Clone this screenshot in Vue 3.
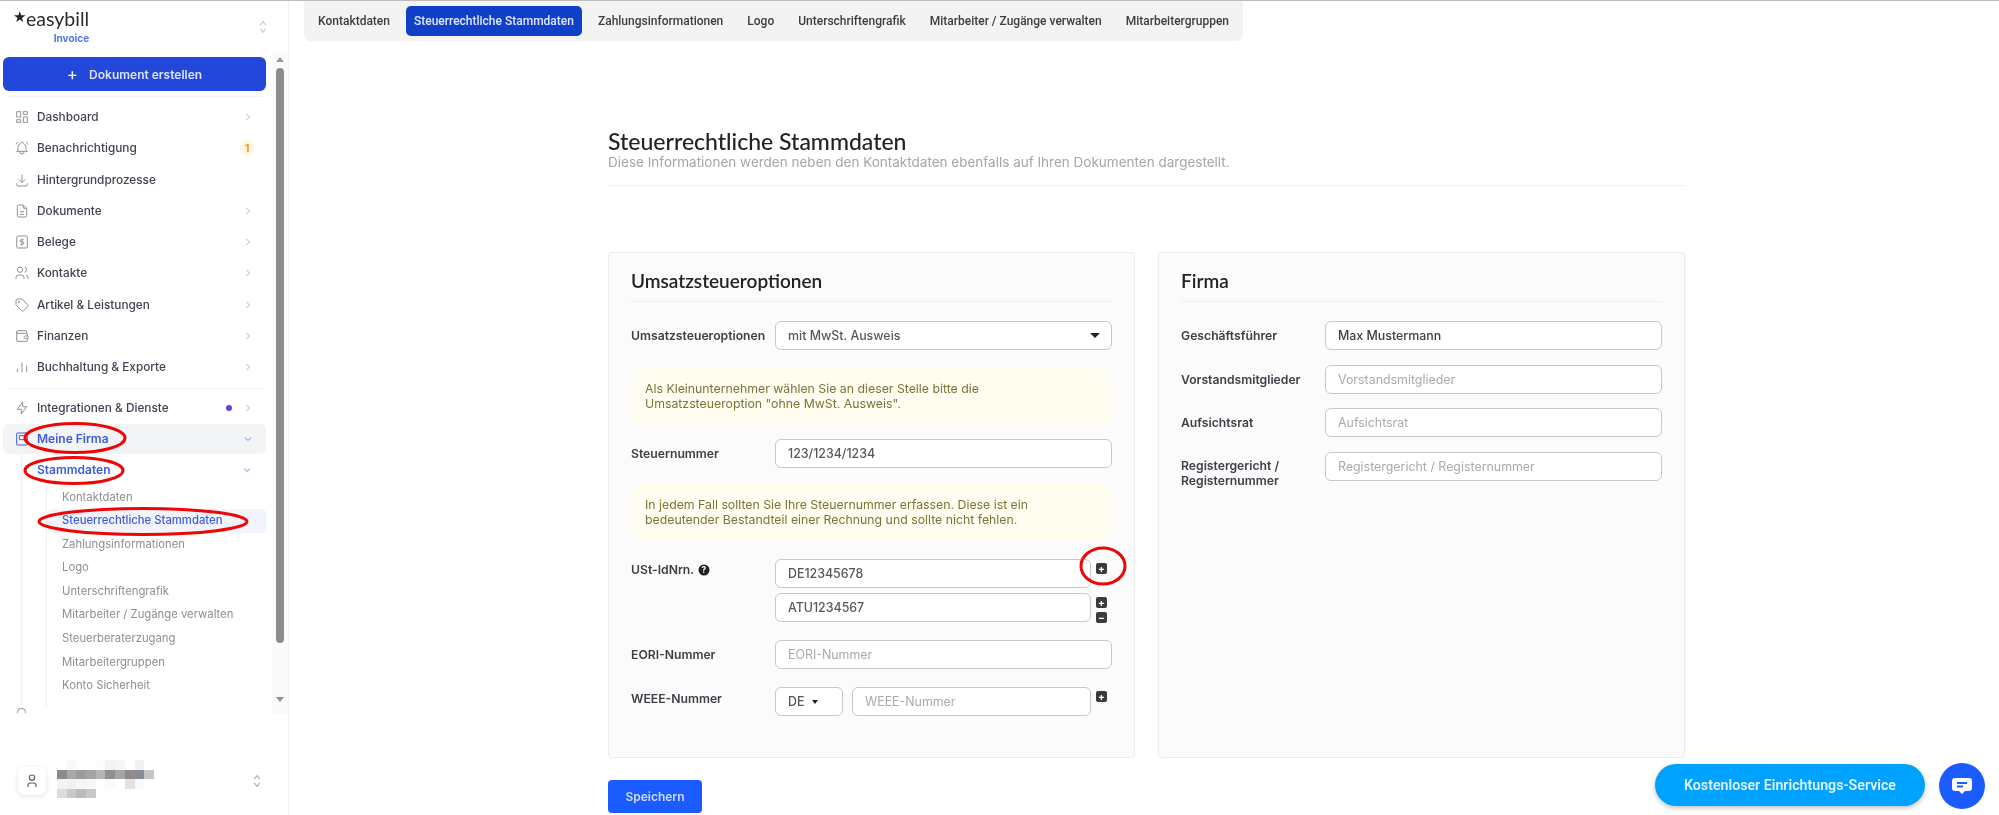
<script setup>
const nav = [
  { label: 'Dashboard', chev: true, d: 'M4 4h6v8h-6z M4 16h6v4h-6z M14 12h6v8h-6z M14 4h6v4h-6z' },
  { label: 'Benachrichtigung', badge: '1', d: 'M10 5a2 2 0 1 1 4 0a7 7 0 0 1 4 6v3a4 4 0 0 0 2 3h-16a4 4 0 0 0 2 -3v-3a7 7 0 0 1 4 -6 M9 17v1a3 3 0 0 0 6 0v-1 M21 6.727a11.05 11.05 0 0 0 -2.794 -3.727 M3 6.727a11.05 11.05 0 0 1 2.792 -3.727' },
  { label: 'Hintergrundprozesse', d: 'M4 17v2a2 2 0 0 0 2 2h12a2 2 0 0 0 2 -2v-2 M7 11l5 5l5 -5 M12 4l0 12' },
  { label: 'Dokumente', chev: true, d: 'M14 3v4a1 1 0 0 0 1 1h4 M17 21h-10a2 2 0 0 1 -2 -2v-14a2 2 0 0 1 2 -2h7l5 5v11a2 2 0 0 1 -2 2z M9 9l1 0 M9 13l6 0 M9 17l6 0' },
  { label: 'Belege', chev: true, d: 'M6 3h12a2 2 0 0 1 2 2v14a2 2 0 0 1 -2 2h-12a2 2 0 0 1 -2 -2v-14a2 2 0 0 1 2 -2z M14.5 8.5h-3.5a1.75 1.75 0 0 0 0 3.5h2a1.75 1.75 0 0 1 0 3.5h-3.5 M12 7v10' },
  { label: 'Kontakte', chev: true, d: 'M9 7m-4 0a4 4 0 1 0 8 0a4 4 0 1 0 -8 0 M3 21v-2a4 4 0 0 1 4 -4h4a4 4 0 0 1 4 4v2 M16 3.13a4 4 0 0 1 0 7.75 M21 21v-2a4 4 0 0 0 -3 -3.85' },
  { label: 'Artikel & Leistungen', chev: true, d: 'M7.5 7.5m-1 0a1 1 0 1 0 2 0a1 1 0 1 0 -2 0 M3 6v5.172a2 2 0 0 0 .586 1.414l7.71 7.71a2.41 2.41 0 0 0 3.408 0l5.592 -5.592a2.41 2.41 0 0 0 0 -3.408l-7.71 -7.71a2 2 0 0 0 -1.414 -.586h-5.172a3 3 0 0 0 -3 3z' },
  { label: 'Finanzen', chev: true, d: 'M19 8v-3a1 1 0 0 0 -1 -1h-12a2 2 0 0 0 -2 2 M4 6a2 2 0 0 0 2 2h13a1 1 0 0 1 1 1v3 M20 16v3a1 1 0 0 1 -1 1h-13a2 2 0 0 1 -2 -2v-12 M21 12v4h-4a2 2 0 0 1 0 -4h4' },
  { label: 'Buchhaltung & Exporte', chev: true, d: 'M5 20v-5 M12 20v-15 M19 20v-10' },
]
const subs = ['Kontaktdaten', 'Steuerrechtliche Stammdaten', 'Zahlungsinformationen', 'Logo', 'Unterschriftengrafik', 'Mitarbeiter / Zugänge verwalten', 'Steuerberaterzugang', 'Mitarbeitergruppen', 'Konto Sicherheit']
const tabs = ['Kontaktdaten', 'Steuerrechtliche Stammdaten', 'Zahlungsinformationen', 'Logo', 'Unterschriftengrafik', 'Mitarbeiter / Zugänge verwalten', 'Mitarbeitergruppen']
const mosaic = [
  ['#fff','#fafafa','#fff','#fff','#fcfcfc','#f3f3f3','#f6f6f6','#fff','#f1f1f1','#fff'],
  ['#8f8a8a','#aaa7a7','#9a9ca0','#a5a3a3','#b5b5b5','#8f9090','#a5a5a5','#8f8b8a','#868d98','#c5c5c5'],
  ['#f3f3f3','#f1f1f1','#f6f6f6','#f6f6f6','#fff','#fafafa','#fff','#e4e2e2','#fafafa','#fff'],
  ['#dcdcdc','#c9c9c9','#b8bbc2','#c9c9c9','#fff','#fff','#fff','#fff','#fff','#fff'],
]
</script>

<template>
  <div class="app">
    <aside class="sidebar">
      <div class="brand">
        <div class="logo">
          <div class="logo-main"><span class="star">★</span><span>easybill</span></div>
          <div class="logo-sub">Invoice</div>
        </div>
        <svg class="updown" viewBox="0 0 24 24" width="14" height="16"><path d="M7 9l5 -6l5 6 M7 15l5 6l5 -6" /></svg>
      </div>
      <div class="scroll-wrap">
        <div class="scroll-body">
          <button class="create"><span class="plus">+</span>Dokument erstellen</button>
          <div class="divider first"></div>
          <div v-for="item in nav" :key="item.label" class="nav-item">
            <svg class="nav-icon" viewBox="0 0 24 24" width="16" height="16"><path :d="item.d" /></svg>
            <span class="nav-label">{{ item.label }}</span>
            <span v-if="item.badge" class="badge">{{ item.badge }}</span>
            <svg v-if="item.chev" class="chev" viewBox="0 0 24 24" width="12" height="12"><path d="M9 6l6 6l-6 6" /></svg>
          </div>
          <div class="divider second"></div>
          <div class="nav-item">
            <svg class="nav-icon" viewBox="0 0 24 24" width="16" height="16"><path d="M13 3v7h6l-8 11v-7h-6l8 -11" /></svg>
            <span class="nav-label">Integrationen &amp; Dienste</span>
            <span class="dot"></span>
            <svg class="chev" viewBox="0 0 24 24" width="12" height="12"><path d="M9 6l6 6l-6 6" /></svg>
          </div>
          <div class="nav-item current">
            <svg class="nav-icon blue" viewBox="0 0 24 24" width="16" height="16"><path d="M5 3h14a1 1 0 0 1 1 1v16a1 1 0 0 1 -1 1h-14a1 1 0 0 1 -1 -1v-16a1 1 0 0 1 1 -1z M8 7h8v6h-8z" /></svg>
            <span class="nav-label">Meine Firma</span>
            <svg class="chev down" viewBox="0 0 24 24" width="12" height="12"><path d="M6 9l6 6l6 -6" /></svg>
          </div>
          <div class="tree">
            <div class="tree-head">
              <span>Stammdaten</span>
              <svg class="chev down" viewBox="0 0 24 24" width="12" height="12"><path d="M6 9l6 6l6 -6" /></svg>
            </div>
            <div class="subtree">
              <div v-for="s in subs" :key="s" class="sub" :class="{ active: s === 'Steuerrechtliche Stammdaten' }">{{ s }}</div>
            </div>
          </div>
        </div>
        <div class="scrollbar">
          <span class="arrow up"></span>
          <span class="thumb"></span>
          <span class="arrow dn"></span>
        </div>
        <span class="clipped-arc"></span>
      </div>
      <div class="user">
        <div class="avatar">
          <svg viewBox="0 0 24 24" width="16" height="16"><path d="M8 7a4 4 0 1 0 8 0a4 4 0 0 0 -8 0 M6 21v-2a4 4 0 0 1 4 -4h4a4 4 0 0 1 4 4v2" /></svg>
        </div>
        <div class="mosaic">
          <template v-for="(row, r) in mosaic" :key="r">
            <span v-for="(c, i) in row" :key="i" :style="{ background: c }"></span>
          </template>
        </div>
        <svg class="updown user-ud" viewBox="0 0 24 24" width="14" height="16"><path d="M7 9l5 -6l5 6 M7 15l5 6l5 -6" /></svg>
      </div>
    </aside>

    <main class="main">
      <nav class="tabs">
        <span v-for="t in tabs" :key="t" class="tab" :class="{ on: t === 'Steuerrechtliche Stammdaten' }">{{ t }}</span>
      </nav>
      <div class="content">
        <header class="page-head">
          <h1>Steuerrechtliche Stammdaten</h1>
          <p>Diese Informationen werden neben den Kontaktdaten ebenfalls auf Ihren Dokumenten dargestellt.</p>
        </header>
        <div class="cards">
          <section class="card">
            <h2>Umsatzsteueroptionen</h2>
            <div class="row r-select">
              <label>Umsatzsteueroptionen</label>
              <div class="field select"><span>mit MwSt. Ausweis</span><i class="caret"></i></div>
            </div>
            <div class="notice">Als Kleinunternehmer wählen Sie an dieser Stelle bitte die<br />Umsatzsteueroption "ohne MwSt. Ausweis".</div>
            <div class="row r-tax">
              <label>Steuernummer</label>
              <input class="field" readonly value="123/1234/1234" />
            </div>
            <div class="notice">In jedem Fall sollten Sie Ihre Steuernummer erfassen. Diese ist ein<br />bedeutender Bestandteil einer Rechnung und sollte nicht fehlen.</div>
            <div class="row r-ust">
              <label class="top">USt-IdNrn.
                <svg class="help" viewBox="0 0 12 12" width="12" height="12"><circle cx="6" cy="6" r="5.5" fill="#222" /><text x="6" y="9" text-anchor="middle" font-size="8.5" font-weight="700" font-family="Inter" fill="#fff">?</text></svg>
              </label>
              <div class="stack">
                <div class="with-btn">
                  <input class="field" readonly value="DE12345678" />
                  <div class="btns"><span class="sq">+</span></div>
                </div>
                <div class="with-btn">
                  <input class="field" readonly value="ATU1234567" />
                  <div class="btns"><span class="sq">+</span><span class="sq">−</span></div>
                </div>
              </div>
            </div>
            <div class="row r-eori">
              <label>EORI-Nummer</label>
              <input class="field" readonly placeholder="EORI-Nummer" />
            </div>
            <div class="row r-weee">
              <label class="weee-label">WEEE-Nummer</label>
              <div class="with-btn">
                <div class="field select de"><span>DE</span><i class="caret small"></i></div>
                <input class="field" readonly placeholder="WEEE-Nummer" />
                <div class="btns"><span class="sq">+</span></div>
              </div>
            </div>
          </section>
          <section class="card">
            <h2>Firma</h2>
            <div class="row r-select firm">
              <label>Geschäftsführer</label>
              <input class="field dark" readonly value="Max Mustermann" />
            </div>
            <div class="row firm next">
              <label>Vorstandsmitglieder</label>
              <input class="field" readonly placeholder="Vorstandsmitglieder" />
            </div>
            <div class="row firm next">
              <label>Aufsichtsrat</label>
              <input class="field" readonly placeholder="Aufsichtsrat" />
            </div>
            <div class="row firm next">
              <label class="top reg">Registergericht /<br />Registernummer</label>
              <input class="field" readonly placeholder="Registergericht / Registernummer" />
            </div>
          </section>
        </div>
        <button class="save">Speichern</button>
      </div>
    </main>

    <button class="service">Kostenloser Einrichtungs-Service</button>
    <button class="chat" aria-label="Chat">
      <svg viewBox="0 0 24 24" width="24" height="24"><path d="M5 4h14a3 3 0 0 1 3 3v7a3 3 0 0 1 -3 3h-4l-3 3l-3 -3h-4a3 3 0 0 1 -3 -3v-7a3 3 0 0 1 3 -3z" fill="#fff" /><path d="M7 9h10M7 12.500h6" stroke="#1a5cff" stroke-width="1.800" /></svg>
    </button>

    <svg class="marks" viewBox="0 0 1999 815" width="1999" height="815">
      <ellipse cx="75" cy="438" rx="50" ry="14.500" />
      <ellipse cx="74" cy="470.500" rx="49" ry="13" />
      <ellipse cx="143" cy="521.500" rx="104" ry="13" />
      <ellipse cx="1103" cy="566" rx="22" ry="18" />
    </svg>
  </div>
</template>

<style>
html, body { margin: 0; background: #fff; }
</style>

<style scoped>
.app {
  position: relative;
  display: flex;
  width: 1999px;
  height: 815px;
  overflow: hidden;
  border-top: 1px solid #bdbdbd;
  box-sizing: border-box;
  font-family: Inter, "Liberation Sans", sans-serif;
  color: #3a3f4a;
  background: #fff;
  filter: blur(0.4px);
}
.sidebar {
  width: 289px;
  flex: none;
  display: flex;
  flex-direction: column;
  border-right: 1px solid #f1f1f3;
  box-sizing: border-box;
}
.brand {
  height: 51px;
  flex: none;
  display: flex;
  justify-content: space-between;
  align-items: center;
  padding: 0 18px 0 13px;
}
.logo-main { display: flex; align-items: baseline; font-family: Lato, sans-serif; font-size: 19.500px; line-height: 20px; color: #2b2b2b; margin-top: 0; }
.star { font-size: 15px; margin-right: 0; position: relative; top: -4px; color: #222; }
.logo-sub { font-size: 10px; font-weight: 700; color: #4c75f0; text-align: right; line-height: 12px; margin-top: 2px; padding-right: 0; }
.updown { fill: none; stroke: #c8c8c8; stroke-width: 2; }
.scroll-wrap { height: 662px; flex: none; display: flex; overflow: hidden; position: relative; }
.scroll-body { flex: 1; min-width: 0; overflow: hidden; padding: 5px 0 0 3px; height: 649px; }
.create {
  display: flex;
  align-items: center;
  justify-content: center;
  width: 263px;
  height: 34px;
  border: 0;
  border-radius: 6px;
  background: #2347d8;
  color: #dbe3fb;
  font: 600 12px Inter, sans-serif;
}
.plus { font-size: 17px; font-weight: 400; margin-right: 11px; line-height: 1; color: #fff; }
.divider { height: 1px; background: #f3f3f4; width: 256px; margin-left: 4px; }
.divider.first { margin-top: 5px; margin-bottom: 4.500px; }
.divider.second { margin-top: 5px; margin-bottom: 3.500px; }
.nav-item {
  display: flex;
  align-items: center;
  width: 263px;
  height: 31.250px;
  box-sizing: border-box;
  padding: 0 12px 0 11px;
  font-size: 11.800px;
  font-weight: 500;
  color: #3f4452;
}
.nav-icon { flex: none; fill: none; stroke: #8e9196; stroke-width: 1.500; margin-right: 7px; width: 16px; }
.nav-icon.blue { stroke: #3b5ce0; }
.nav-label { flex: 1; white-space: nowrap; }
.chev { flex: none; fill: none; stroke: #b4b4b8; stroke-width: 2; }
.chev.down { stroke: #6c86e6; }
.badge {
  width: 14px;
  height: 16px;
  border-radius: 8px;
  background: #fff6e2;
  color: #ef9c2c;
  font-size: 11px;
  font-weight: 700;
  text-align: center;
  line-height: 16px;
  margin-right: 0;
}
.dot { width: 6px; height: 6px; border-radius: 50%; background: #6a3fd8; margin-right: 10px; }
.nav-item.current { background: #f3f4f6; border-radius: 6px; height: 30px; margin-top: 0; font-size: 12px; }
.nav-item.current .nav-label { color: #3c5be0; font-weight: 600; }
.tree { margin-left: 18px; border-left: 1px solid #eeeeef; }
.tree-head {
  display: flex;
  align-items: center;
  justify-content: space-between;
  height: 32px;
  padding: 0 13px 0 15px;
  width: 216px;
  box-sizing: content-box;
  font-size: 12px;
  font-weight: 600;
  color: #3c5be0;
}
.subtree { margin-left: 24px; border-left: 1px solid #eeeeef; height: 226px; margin-top: 0; }
.sub {
  height: 23.600px;
  line-height: 23.600px;
  padding-left: 15px;
  width: 205px;
  font-size: 11.300px;
  color: #8d8f94;
  white-space: nowrap;
}
.sub.active { background: #f2f4fd; color: #3c5be0; font-weight: 500; border-radius: 6px; }
.scrollbar {
  width: 16px;
  flex: none;
  background: #fafafa;
  display: flex;
  flex-direction: column;
  align-items: center;
  height: 662px;
  padding-top: 5px;
  box-sizing: border-box;
}
.arrow { width: 0; height: 0; border-left: 4px solid transparent; border-right: 4px solid transparent; }
.arrow.up { border-bottom: 5px solid #9b9b9b; margin-bottom: 6px; }
.arrow.dn { border-top: 5px solid #8f8f8f; margin-top: 54px; }
.thumb { width: 8px; height: 575px; background: #8d8d8d; border-radius: 4px; flex: none; }
.clipped-arc {
  position: absolute;
  left: 17px;
  top: 656px;
  width: 9px;
  height: 5px;
  box-sizing: border-box;
  border: 1px solid #9a9a9a;
  border-bottom: 0;
  border-radius: 5px 5px 0 0;
}
.user { flex: 1; display: flex; align-items: flex-start; padding: 46px 24px 0 18px; position: relative; }
.avatar {
  width: 28px;
  height: 28px;
  flex: none;
  display: flex;
  align-items: center;
  justify-content: center;
  border-radius: 6px;
  background: #fff;
  box-shadow: 0 1px 4px rgba(0, 0, 0, 0.13);
  margin-top: 7px;
}
.avatar svg { fill: none; stroke: #666; stroke-width: 1.800; }
.mosaic { display: grid; grid-template-columns: repeat(10, 9.700px); grid-auto-rows: 9.500px; margin-left: 11px; filter: blur(0.5px); }
.user-ud { margin-left: auto; margin-top: 13px; stroke: #a8a8a8; }

.main { flex: 1; min-width: 0; padding-left: 15px; }
.tabs {
  display: inline-flex;
  align-items: center;
  height: 40px;
  gap: 8px;
  padding: 0 6px;
  background: #f3f3f3;
  border-radius: 0 0 6px 6px;
  box-sizing: border-box;
  vertical-align: top;
}
.tab {
  font: 500 12px Roboto, sans-serif;
  line-height: 30px;
  height: 30px;
  padding: 0 8px;
  color: #3d3d3d;
  border-radius: 5px;
  white-space: nowrap;
}
.tab.on { background: #1040c8; color: #dfe6fa; }
.content { width: 1077px; margin-left: 304px; }
.page-head { border-bottom: 1px solid #eeeeee; margin-top: 88px; height: 56px; box-sizing: content-box; }
h1 { margin: 0; font: 500 23px/25px Lato, sans-serif; color: #222; }
.page-head p { margin: 0; font: 400 13.500px/16px Inter, sans-serif; color: #a6a6a6; }
.cards { display: grid; grid-template-columns: 527px 527px; gap: 23px; margin-top: 66px; }
.card {
  height: 506px;
  box-sizing: border-box;
  background: #fbfbfb;
  border: 1px solid #ececec;
  border-radius: 3px;
  padding: 16px 22px 0;
}
.card h2 {
  margin: 0;
  font: 600 19px/24px Lato, sans-serif;
  color: #222;
  padding-bottom: 8px;
  border-bottom: 1px solid #efefef;
}
.row { display: grid; grid-template-columns: 144px 1fr; align-items: center; }
label { font-size: 12.200px; font-weight: 600; color: #3c3f46; white-space: nowrap; line-height: 15px; }
.field {
  display: flex;
  align-items: center;
  justify-content: space-between;
  width: 100%;
  height: 29px;
  box-sizing: border-box;
  border: 1px solid #c8c8c8;
  border-radius: 6px;
  background: #fff;
  padding: 0 12px;
  font: 500 12.400px Inter, sans-serif;
  color: #55585e;
  outline: 0;
  min-width: 0;
}
.field.dark { color: #3a3f4a; }
.field::placeholder { color: #a9aaad; font-weight: 400; }
.caret { width: 0; height: 0; border-left: 5px solid transparent; border-right: 5px solid transparent; border-top: 5px solid #222; margin-right: -1px; }
.caret.small { border-left-width: 3.500px; border-right-width: 3.500px; border-top-width: 4px; margin: 0 0 0 8px; }
.r-select { margin-top: 19px; }
.notice {
  margin-top: 18px;
  height: 56px;
  box-sizing: border-box;
  padding: 13px 14px;
  background: #fffdf0;
  border-radius: 10px;
  font-size: 12.300px;
  line-height: 15px;
  color: #7a7438;
}
.r-tax { margin-top: 15px; margin-bottom: -2px; }
.r-ust { margin-top: 19px; align-items: start; }
.top { padding-top: 3px; }
.help { vertical-align: -2px; margin-left: 1px; }
.stack { display: flex; flex-direction: column; gap: 5px; }
.with-btn { display: flex; gap: 0; align-items: flex-start; position: relative; }
.with-btn .field { flex: 1; }
.btns { width: 21px; flex: none; display: flex; flex-direction: column; align-items: flex-end; gap: 4px; padding: 4px 5px 0 0; box-sizing: border-box; }
.sq {
  width: 11px;
  height: 11px;
  background: #3b3b3b;
  border-radius: 2px;
  color: #fff;
  font-size: 10px;
  font-weight: 700;
  line-height: 11px;
  text-align: center;
}
.r-eori { margin-top: 17px; }
.r-weee { margin-top: 18px; }
.weee-label { align-self: start; padding-top: 4px; }
.field.de { flex: none; width: 68px; margin-right: 9px; padding-right: 0; justify-content: flex-start; }
.firm { grid-template-columns: 144px 1fr; }
.firm.next { margin-top: 14.500px; align-items: start; }
.firm label:not(.reg) { align-self: center; }
.reg { padding-top: 6px; }
.save {
  display: block;
  margin-top: 22px;
  width: 94px;
  height: 33px;
  border: 0;
  border-radius: 4px;
  background: #1a5cff;
  color: #cfdcff;
  font: 600 12px Inter, sans-serif;
}
.service {
  position: absolute;
  left: 1655px;
  top: 763px;
  width: 270px;
  height: 42px;
  border: 0;
  border-radius: 21px;
  background: #00a2ff;
  color: #dff2ff;
  font: 600 14.200px Roboto, sans-serif;
  box-shadow: 0 2px 5px rgba(0, 0, 0, 0.25);
}
.chat {
  position: absolute;
  left: 1939px;
  top: 762px;
  width: 46px;
  height: 46px;
  padding: 0;
  border: 0;
  border-radius: 50%;
  background: #1a5cff;
  display: flex;
  align-items: center;
  justify-content: center;
}
.chat path:last-child { fill: none; }
.marks { position: absolute; left: 0; top: -1px; pointer-events: none; }
.marks ellipse { fill: none; stroke: #ee0606; stroke-width: 3; }
</style>
